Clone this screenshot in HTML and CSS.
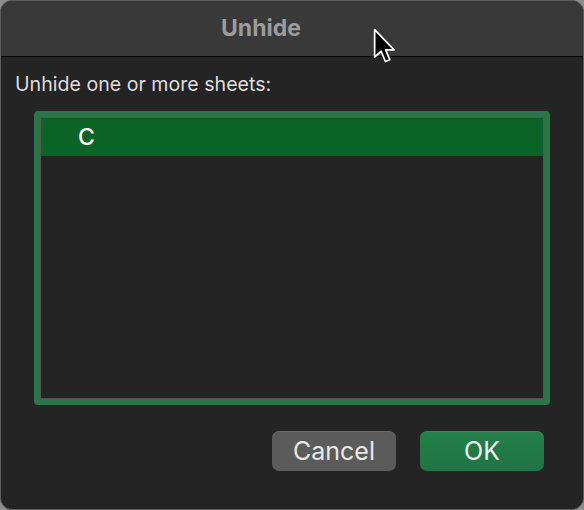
FILE: index.html
```html
<!DOCTYPE html>
<html>
<head>
<meta charset="utf-8">
<link rel="stylesheet" href="styles.css">
</head>
<body>
<div class="window">
  <div class="titlebar"><span class="title">Unhide</span></div>
  <div class="content">
    <div class="label">Unhide one or more sheets:</div>
    <div class="listring">
      <div class="list">
        <div class="row selected">C</div>
      </div>
    </div>
    <div class="buttons">
      <div class="btn cancel">Cancel</div>
      <div class="btn ok">OK</div>
    </div>
  </div>
  <svg class="cursor" width="26" height="40" viewBox="0 0 24 37">
    <path d="M1.5 1.5 L1.5 27 L7.5 21.5 L11.5 31 L15.5 29.3 L11.6 20.2 L19.5 20.2 Z" fill="#000" stroke="#fff" stroke-width="1.6" stroke-linejoin="round"/>
  </svg>
</div>
</body>
</html>
```

FILE: styles.css
```css
html, body {
  margin: 0;
  padding: 0;
  background: #8c8c8c;
  width: 584px;
  height: 510px;
  overflow: hidden;
}
.window {
  position: relative;
  width: 584px;
  height: 510px;
  box-sizing: border-box;
  border-radius: 12px;
  border: 1px solid #5e5e5e;
  background: #242424;
  overflow: hidden;
  font-family: Inter, "Liberation Sans", sans-serif;
  display: flex;
  flex-direction: column;
}
.titlebar {
  height: 56px;
  flex: none;
  background: #393939;
  border-bottom: 1px solid #050505;
  color: #9c9c9c;
  font-weight: 700;
  font-size: 23px;
  display: flex;
  align-items: center;
  padding: 0 0 2px 220px;
  box-sizing: border-box;
}
.content {
  flex: 1;
  display: flex;
  flex-direction: column;
  padding: 15px 0 0 13px;
}
.label {
  color: #dedede;
  font-size: 19.6px;
  line-height: 24px;
  margin-left: 1px;
}
.listring {
  margin: 15px 0 0 20px;
  width: 516px;
  height: 294px;
  box-sizing: border-box;
  border: 6px solid #2d7446;
  border-radius: 4px;
  background: #2d7446;
}
.list {
  height: 100%;
  box-sizing: border-box;
  border: 1px solid #555;
  background: #242424;
}
.row {
  height: 38px;
  display: flex;
  align-items: center;
  padding-left: 37px;
  color: #fff;
  font-size: 23px;
  font-weight: 500;
}
.selected {
  background: #0b6427;
}
.buttons {
  display: flex;
  gap: 24px;
  margin: 26px 0 0 258px;
}
.btn {
  width: 124px;
  height: 40px;
  border-radius: 7px;
  display: flex;
  align-items: center;
  justify-content: center;
  font-size: 25px;
  color: #e8e8e8;
  box-sizing: border-box;
  padding-bottom: 2px;
}
.cancel {
  background: #5b5b5b;
  border-top: 1px solid #6a6a6a;
}
.ok {
  background: linear-gradient(#24804a, #1f7443);
  border-top: 1px solid #2f8d55;
  color: #f0f0f0;
}
.cursor {
  position: absolute;
  left: 372px;
  top: 27px;
}
```
